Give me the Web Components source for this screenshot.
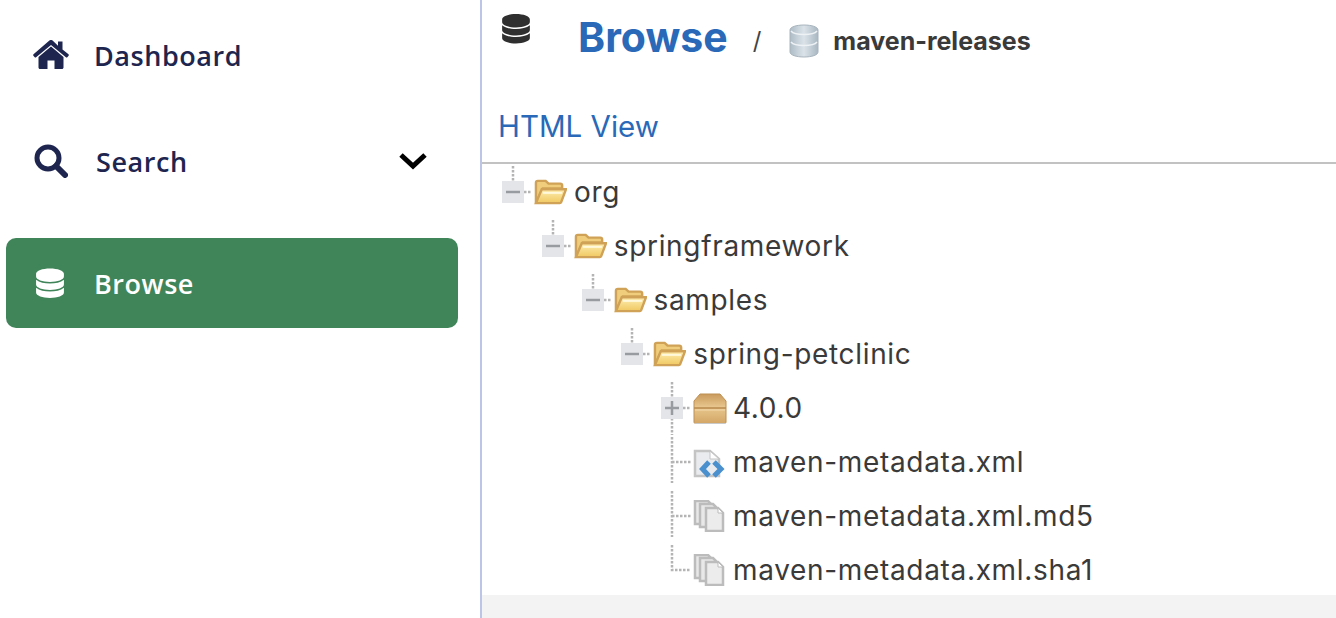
<!DOCTYPE html>
<html>
<head>
<meta charset="utf-8">
<title>Browse</title>
<style>
  html, body { margin: 0; height: 100%; overflow: hidden; background: #fff; }
  body { display: flex; height: 618px; }
</style>
</head>
<body>
  <side-nav>
    <nav-item icon="home" style="margin-top:10px;--pad:27px;--text:88px">Dashboard</nav-item>
    <nav-item icon="search" chevron style="margin-top:16px;--pad:28px;--text:90px">Search</nav-item>
    <nav-item icon="db" active style="margin-top:32px;--pad:29px;--text:88px">Browse</nav-item>
  </side-nav>
  <repo-browser>
    <tree-row level="0" joint="minus" icon="folder">org</tree-row>
    <tree-row level="1" joint="minus" icon="folder">springframework</tree-row>
    <tree-row level="2" joint="minus" icon="folder">samples</tree-row>
    <tree-row level="3" joint="minus" icon="folder">spring-petclinic</tree-row>
    <tree-row level="4" joint="plus" icon="box">4.0.0</tree-row>
    <tree-row level="4" joint="tee" icon="xml">maven-metadata.xml</tree-row>
    <tree-row level="4" joint="tee" icon="copy">maven-metadata.xml.md5</tree-row>
    <tree-row level="4" joint="end" icon="copy">maven-metadata.xml.sha1</tree-row>
  </repo-browser>

<script>
// shapes shared by sidebar and header
const DB_PATH = 'M14 1C7 1 1 3 1 6v2.500c0 3 6 5 13 5s13-2 13-5V6c0-3-6-5-13-5zM1 11.500V16c0 3 6 5 13 5s13-2 13-5v-4.500c-3 2.500-8 3.500-13 3.500S4 14 1 11.500zM1 19v4.500c0 3 6 5 13 5s13-2 13-5V19c-3 2.500-8 3.500-13 3.500S4 21.500 1 19z';

const navIcons = {
  home: `<svg width="36" height="30" viewBox="0 0 36 30"><path fill="currentColor" d="M18 6.500 5.500 17v10.500c0 .8.7 1.500 1.500 1.500h7.500v-8.500h7V29H29c.8 0 1.500-.7 1.500-1.500V17z"/><path fill="currentColor" d="M35.500 14.300 29.500 9.400V1.500h-4.500v4.200L19.600.6a2.500 2.500 0 0 0-3.200 0L.5 14.300c-.4.400-.5 1-.1 1.400l1.300 1.500c.4.400 1 .5 1.400.1L18 5l14.900 12.300c.4.400 1 .3 1.400-.1l1.300-1.500c.4-.4.300-1-.1-1.400z"/></svg>`,
  search: `<svg width="34" height="34" viewBox="0 0 34 34"><circle cx="14" cy="14" r="11" fill="none" stroke="currentColor" stroke-width="5"/><path d="M22 22l9 9" stroke="currentColor" stroke-width="6" stroke-linecap="round"/></svg>`,
  db: `<svg width="30" height="33" viewBox="0 0 28 30"><path fill="currentColor" d="${DB_PATH}"/></svg>`
};

const navTemplate = document.createElement('template');
navTemplate.innerHTML = `
  <style>
    :host {
      display: flex;
      align-items: center;
      height: 90px;
      border-radius: 10px;
      color: #1e2650;
      font: 560 27px/1 'Open Sans', sans-serif;
      letter-spacing: .55px;
    }
    :host([active]) { background: #40855a; color: #fff; }
    .icon { width: var(--text, 89px); flex: none; display: flex; box-sizing: border-box; padding-left: var(--pad, 27px); }
    .label { flex: 1; }
    .chev { margin-right: 30px; color: #000; display: none; }
    :host([chevron]) .chev { display: block; }
  </style>
  <div class="icon"></div>
  <div class="label"><slot></slot></div>
  <svg class="chev" width="30" height="20" viewBox="0 0 30 20"><path d="M3 4l12 11L27 4" fill="none" stroke="currentColor" stroke-width="5"/></svg>
`;

class NavItem extends HTMLElement {
  constructor() {
    super();
    this.attachShadow({mode: 'open'});
    this.shadowRoot.appendChild(navTemplate.content.cloneNode(true));
    this.shadowRoot.querySelector('.icon').innerHTML = navIcons[this.getAttribute('icon')];
  }
}
customElements.define('nav-item', NavItem);

const sideTemplate = document.createElement('template');
sideTemplate.innerHTML = `
  <style>
    :host {
      display: block;
      width: 480px;
      flex: none;
      box-sizing: border-box;
      padding: 0 22px 0 6px;
    }
  </style>
  <slot></slot>
`;
class SideNav extends HTMLElement {
  constructor() {
    super();
    this.attachShadow({mode: 'open'});
    this.shadowRoot.appendChild(sideTemplate.content.cloneNode(true));
  }
}
customElements.define('side-nav', SideNav);

const browserTemplate = document.createElement('template');
browserTemplate.innerHTML = `
  <style>
    :host {
      display: flex;
      flex-direction: column;
      flex: 1;
      min-width: 0;
      border-left: 2px solid #bcc5e6;
      font-family: Inter, sans-serif;
      color: #3a3a3a;
    }
    .head { height: 164px; box-sizing: border-box; border-bottom: 2px solid #c2c2c2; flex: none; }
    .crumbs { display: flex; align-items: flex-start; height: 86px; padding-left: 19px; }
    .db { color: #2f2f2f; margin-top: 13px; filter: blur(.3px); }
    h1 { margin: 11px 0 0 47px; font: 700 41px/52px Inter, sans-serif; color: #2a68b8; }
    .sep { margin: 27px 0 0 25px; font: 400 24px/28px Inter, sans-serif; color: #444; }
    .repo { margin: 24px 0 0 27px; filter: blur(.4px); }
    .name { margin: 25px 0 0 13px; font: 700 25px/32px Inter, sans-serif; color: #3a3a3a; }
    .tab { padding: 22px 0 0 16px; font: 400 29.500px/36px Inter, sans-serif; color: #2a68b8; }
    .tree { flex: none; height: 431px; padding-top: 1px; box-sizing: border-box; }
    .foot { flex: 1; background: #f3f3f3; }
  </style>
  <div class="head">
    <div class="crumbs">
      <svg class="db" width="30" height="32" viewBox="0 0 28 30"><path fill="currentColor" d="${DB_PATH}"/></svg>
      <h1>Browse</h1>
      <span class="sep">/</span>
      <svg class="repo" width="32" height="34" viewBox="0 0 32 34">
        <defs><linearGradient id="rg" x1="0" x2="1" y1="0" y2="0"><stop offset="0" stop-color="#aebcc6"/><stop offset=".5" stop-color="#dbe3e9"/><stop offset="1" stop-color="#a9b7c2"/></linearGradient></defs>
        <path fill="url(#rg)" stroke="#a8b4bd" d="M2 6c0-3 6-5 14-5s14 2 14 5v22c0 3-6 5-14 5S2 31 2 28z"/>
        <path fill="none" stroke="#eef2f5" stroke-width="1.500" d="M3 7c2 2.500 7 3.500 13 3.500S27 9.500 29 7M3 18c2 2.500 7 3.500 13 3.500S27 20.500 29 18"/>
      </svg>
      <span class="name">maven-releases</span>
    </div>
    <div class="tab">HTML View</div>
  </div>
  <div class="tree"><slot></slot></div>
  <div class="foot"></div>
`;
class RepoBrowser extends HTMLElement {
  constructor() {
    super();
    this.attachShadow({mode: 'open'});
    this.shadowRoot.appendChild(browserTemplate.content.cloneNode(true));
  }
}
customElements.define('repo-browser', RepoBrowser);

// dotted tree lines, drawn in a 36x54 cell
function jointSvg(kind) {
  const dots = 'stroke="#b4b4b4" stroke-width="2.500" stroke-dasharray="2.500 1.500" fill="none"';
  const box = `<rect x="4" y="16" width="22" height="22" fill="#e3e5e9"/>`;
  let body = '';
  if (kind === 'minus') {
    body = `<path d="M15 1v15M26 27h8" ${dots}/>${box}<path d="M8 27h14" stroke="#989ca1" stroke-width="2.500"/>`;
  } else if (kind === 'plus') {
    body = `<path d="M15 1v53M26 27h8" ${dots}/>${box}<path d="M8 27h14M15 20v14" stroke="#989ca1" stroke-width="2.500"/>`;
  } else if (kind === 'tee') {
    body = `<path d="M15 2v46M15 27h19" ${dots}/>`;
  } else {
    body = `<path d="M15 2v25h19" ${dots}/>`;
  }
  return `<svg width="36" height="54" viewBox="0 0 36 54">${body}</svg>`;
}

const rowIcons = {
  folder: `<svg width="33" height="26" viewBox="0 0 34 28" preserveAspectRatio="none">
    <defs><linearGradient id="f" x1="0" x2="0" y1="0" y2="1"><stop offset="0" stop-color="#fdeeb4"/><stop offset="1" stop-color="#f0c860"/></linearGradient></defs>
    <path fill="#efcd7c" stroke="#cfa257" stroke-width="2.500" d="M2 26V4c0-1 .8-2 2-2h8l3 3h12c1 0 2 1 2 2v3H9z"/>
    <path fill="url(#f)" stroke="#cfa257" stroke-width="2.500" d="M2 26 8 11h25l-5 14c-.2.600-.8 1-1.500 1z"/>
    <path stroke="#fff8dc" stroke-width="2" d="M9 15h20"/>
  </svg>`,
  box: `<svg width="34" height="32" viewBox="0 0 34 32">
    <defs><linearGradient id="b" x1="0" x2="0" y1="0" y2="1"><stop offset="0" stop-color="#c99a5c"/><stop offset=".45" stop-color="#e8c78e"/><stop offset="1" stop-color="#d3a666"/></linearGradient></defs>
    <path fill="url(#b)" stroke="#bd8f52" d="M1 9 7 2h20l6 7v21c0 .800-.700 1.500-1.500 1.500h-29C1.700 31.500 1 30.800 1 30z"/>
    <path fill="none" stroke="#b98a4e" stroke-width="1.500" d="M1 16h32"/>
    <path stroke="#f2d9ab" d="M2 18h30"/>
    <path stroke="#c9c9c9" d="M2 31.500h30"/>
  </svg>`,
  xml: `<svg width="34" height="32" viewBox="0 0 34 32">
    <path fill="#e9ebee" stroke="#c4c4c4" stroke-width="2.500" d="M2 5h15l9 8v17H2z"/>
    <path fill="#fff" stroke="#c4c4c4" d="M17 5v8h9z"/>
    <path fill="none" stroke="#4a90cf" stroke-width="5" d="M16 16l-6.500 7 6.500 7M21 16l7 7-7 7"/>
  </svg>`,
  copy: `<svg width="32" height="32" viewBox="0 0 32 32">
    <path fill="#e8e8e8" stroke="#bcbcbc" stroke-width="2.500" d="M2 1h13l3 3v20H2z"/>
    <path fill="#e8e8e8" stroke="#bcbcbc" stroke-width="2.500" d="M7 4h13l3 3v20H7z"/>
    <path fill="#ececec" stroke="#bcbcbc" stroke-width="2.500" d="M13 8h12l5 5v18H13z"/>
    <path fill="#fff" stroke="#bcbcbc" d="M25 8v5h5z"/>
  </svg>`
};

const rowTemplate = document.createElement('template');
rowTemplate.innerHTML = `
  <style>
    :host {
      display: flex;
      align-items: center;
      height: 54px;
      color: #3a3a3a;
      font: 400 28px/54px Inter, sans-serif;
      letter-spacing: .67px;
      white-space: nowrap;
    }
    .joint { flex: none; width: 36px; height: 54px; filter: blur(.4px); }
    .icon { flex: none; width: 40px; display: flex; align-items: center; filter: blur(.4px); }
    svg { display: block; }
  </style>
  <div class="joint"></div>
  <div class="icon"></div>
  <span><slot></slot></span>
`;

class TreeRow extends HTMLElement {
  constructor() {
    super();
    this.attachShadow({mode: 'open'});
    this.shadowRoot.appendChild(rowTemplate.content.cloneNode(true));
    this.shadowRoot.querySelector('.joint').innerHTML = jointSvg(this.getAttribute('joint'));
    this.shadowRoot.querySelector('.icon').innerHTML = rowIcons[this.getAttribute('icon')];
    this.style.paddingLeft = (16 + 39.75 * Number(this.getAttribute('level'))) + 'px';
  }
}
customElements.define('tree-row', TreeRow);
</script>
</body>
</html>
